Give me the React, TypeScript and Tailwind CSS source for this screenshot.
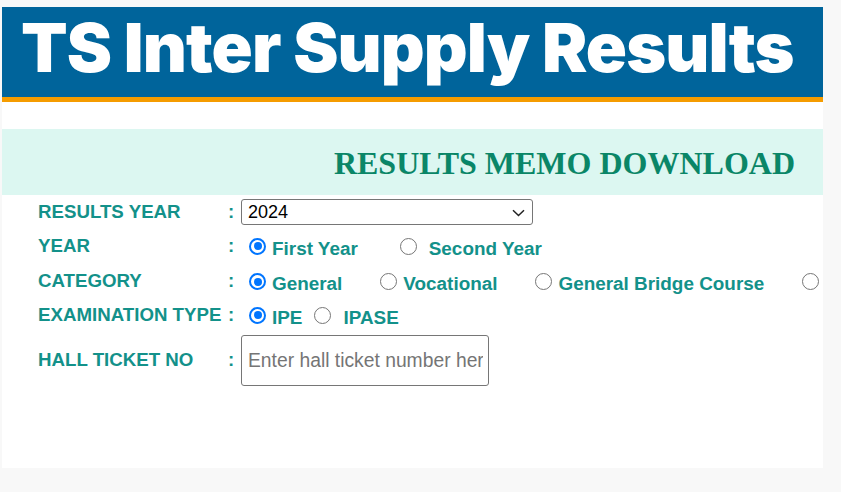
import { useState } from "react";

const LABEL = "w-[190px] shrink-0 font-bold text-[18.7px] text-[#13918a] leading-none";
const COLON = "w-[13px] shrink-0 font-bold text-[18.7px] text-[#13918a] leading-none";
const OPT = "font-bold text-[18.9px] text-[#13918a] leading-none pt-[6px]";

function Radio({ checked, onChange }: { checked: boolean; onChange: () => void }) {
  return (
    <span
      role="radio"
      aria-checked={checked}
      onClick={onChange}
      className={`w-[17px] h-[17px] shrink-0 rounded-full flex items-center justify-center bg-white cursor-pointer ${
        checked ? "border-[2.5px] border-[#0075ff]" : "border-[1.5px] border-[#767676]"
      }`}
    >
      {checked && <span className="w-[8px] h-[8px] rounded-full bg-[#0075ff]" />}
    </span>
  );
}

export default function App() {
  const [year, setYear] = useState("first");
  const [category, setCategory] = useState("general");
  const [exam, setExam] = useState("ipe");

  return (
    <div className="min-h-[492px] bg-[#f8f8f8] pt-[7px] pl-[2px]" style={{ fontFamily: '"Liberation Sans", Arial, sans-serif' }}>
      <div className="w-[821px] h-[461px] bg-white overflow-hidden">
        {/* Banner */}
        <div className="h-[90px] bg-[#00649b] pl-[19px]">
          <h1
            className="text-white text-[68px] font-black leading-[80px] tracking-[-0.9px] whitespace-nowrap"
            style={{ fontFamily: "Inter, sans-serif" }}
          >
            TS Inter Supply Results
          </h1>
        </div>
        <div className="h-[5px] bg-[#f59c00]" />
        <div className="h-[27px]" />

        {/* Heading band */}
        <div className="h-[66px] bg-[#dcf7f1] flex items-center justify-end pr-[28px]">
          <h2
            className="text-[#0a8667] text-[32px] font-bold leading-none pt-[2px]"
            style={{ fontFamily: '"Liberation Serif", "Times New Roman", serif' }}
          >
            RESULTS MEMO DOWNLOAD
          </h2>
        </div>

        {/* Form */}
        <div className="pl-[36px] pt-[4px]">
          <div className="flex items-center h-[26px]">
            <span className={LABEL}>RESULTS YEAR</span>
            <span className={COLON}>:</span>
            <div className="relative w-[292px] h-[26px] border border-[#767676] rounded-[3px] flex items-center pl-[6px]">
              <span className="text-[18px] text-black leading-none">2024</span>
              <svg className="absolute right-[7px] top-[9px]" width="13" height="8" viewBox="0 0 13 8" fill="none">
                <path d="M1 1.2 L6.5 6.5 L12 1.2" stroke="#222" strokeWidth="1.5" />
              </svg>
            </div>
          </div>

          <div className="flex items-center h-[38px] mt-[2px]">
            <span className={LABEL}>YEAR</span>
            <span className={COLON}>:</span>
            <div className="flex items-center pl-[8px]">
              <Radio checked={year === "first"} onChange={() => setYear("first")} />
              <span className={`${OPT} ml-[6px]`}>First Year</span>
              <span className="w-[42px]" />
              <Radio checked={year === "second"} onChange={() => setYear("second")} />
              <span className={`${OPT} ml-[12px]`}>Second Year</span>
            </div>
          </div>

          <div className="flex items-center h-[33px]">
            <span className={LABEL}>CATEGORY</span>
            <span className={COLON}>:</span>
            <div className="flex items-center pl-[8px] whitespace-nowrap">
              <Radio checked={category === "general"} onChange={() => setCategory("general")} />
              <span className={`${OPT} ml-[6px]`}>General</span>
              <span className="w-[38px] shrink-0" />
              <Radio checked={category === "vocational"} onChange={() => setCategory("vocational")} />
              <span className={`${OPT} ml-[6px]`}>Vocational</span>
              <span className="w-[38px] shrink-0" />
              <Radio checked={category === "bridge"} onChange={() => setCategory("bridge")} />
              <span className={`${OPT} ml-[6px]`}>General Bridge Course</span>
              <span className="w-[38px] shrink-0" />
              <Radio checked={category === "other"} onChange={() => setCategory("other")} />
            </div>
          </div>

          <div className="flex items-center h-[34px]">
            <span className={LABEL}>EXAMINATION TYPE</span>
            <span className={COLON}>:</span>
            <div className="flex items-center pl-[8px]">
              <Radio checked={exam === "ipe"} onChange={() => setExam("ipe")} />
              <span className={`${OPT} ml-[6px]`}>IPE</span>
              <span className="w-[12px]" />
              <Radio checked={exam === "ipase"} onChange={() => setExam("ipase")} />
              <span className={`${OPT} ml-[12px]`}>IPASE</span>
            </div>
          </div>

          <div className="flex items-center h-[51px] mt-[3px]">
            <span className={LABEL}>HALL TICKET NO</span>
            <span className={COLON}>:</span>
            <input
              type="text"
              placeholder="Enter hall ticket number here"
              className="w-[248px] h-[51px] border border-[#767676] rounded-[3px] pl-[6px] pr-[5px] text-[19.3px] placeholder:text-[#757575] outline-none"
            />
          </div>
        </div>
      </div>
    </div>
  );
}
